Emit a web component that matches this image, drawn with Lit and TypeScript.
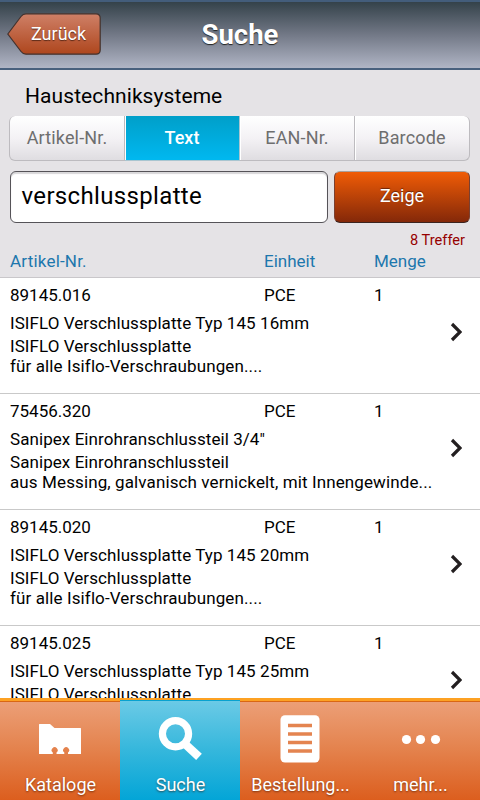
import { LitElement, html, css, svg } from "lit";
import { customElement, state } from "lit/decorators.js";
import { classMap } from "lit/directives/class-map.js";

interface Article {
  nr: string;
  unit: string;
  amount: string;
  title: string;
  line1: string;
  line2: string;
}

const ARTICLES: Article[] = [
  { nr: "89145.016", unit: "PCE", amount: "1", title: "ISIFLO Verschlussplatte Typ 145 16mm", line1: "ISIFLO Verschlussplatte", line2: "für alle Isiflo-Verschraubungen...." },
  { nr: "75456.320", unit: "PCE", amount: "1", title: "Sanipex Einrohranschlussteil 3/4\"", line1: "Sanipex Einrohranschlussteil", line2: "aus Messing, galvanisch vernickelt, mit Innengewinde..." },
  { nr: "89145.020", unit: "PCE", amount: "1", title: "ISIFLO Verschlussplatte Typ 145 20mm", line1: "ISIFLO Verschlussplatte", line2: "für alle Isiflo-Verschraubungen...." },
  { nr: "89145.025", unit: "PCE", amount: "1", title: "ISIFLO Verschlussplatte Typ 145 25mm", line1: "ISIFLO Verschlussplatte", line2: "für alle Isiflo-Verschraubungen...." },
];

const ICONS = {
  folder: svg`<path fill="#fff" d="M39 24.5 Q39 24 39.5 24 H50 L54.5 28 H80.500 Q81 28 81 28.500 V53.500 Q81 54 80.500 54 H68 V52.600 A3 3 0 1 0 64.300 52.600 V54 H56.500 V52.600 A3 3 0 1 0 52.800 52.600 V54 H39.500 Q39 54 39 53.500 Z"/>`,
  search: svg`<circle cx="55.500" cy="33.700" r="13.100" fill="none" stroke="#fff" stroke-width="7.200"/><path d="M64.500 43.500 L79 56.800" stroke="#fff" stroke-width="8.400"/>`,
  order: svg`<rect x="40.500" y="15.300" width="39" height="47.200" rx="4.500" fill="#fff"/><path d="M48 25.500H72M48 34H72M48 42.500H72M48 51H72" stroke="#e48450" stroke-width="3.600"/>`,
  more: svg`<circle cx="46.500" cy="39.500" r="4.600" fill="#fff"/><circle cx="60.500" cy="39.500" r="4.600" fill="#fff"/><circle cx="75.500" cy="39.500" r="4.600" fill="#fff"/>`,
};

@customElement("article-row")
class ArticleRow extends LitElement {
  static properties = { article: { attribute: false } };
  declare article: Article;

  static styles = css`
    :host { display: block; height: 116px; box-sizing: border-box; border-bottom: 1px solid #c9c9c9; padding: 7px 10px 0; background: #fff; color: #000; }
    .layout { display: flex; }
    .info { flex: 1; min-width: 0; font-size: 17px; line-height: 20px; white-space: nowrap; }
    .cells { display: grid; grid-template-columns: 254px 110px 1fr; }
    .title { margin-top: 8px; letter-spacing: .07px; }
    .first { margin-top: 3px; letter-spacing: .07px; }
    .second { letter-spacing: .11px; }
    .arrow { width: 12px; height: 20px; margin: 37px 8px 0 0; flex: none; }
  `;

  render() {
    const a = this.article;
    return html`<div class="layout">
      <div class="info">
        <div class="cells"><span>${a.nr}</span><span>${a.unit}</span><span>${a.amount}</span></div>
        <div class="title">${a.title}</div>
        <div class="first">${a.line1}</div>
        <div class="second">${a.line2}</div>
      </div>
      <svg class="arrow" viewBox="0 0 12 20"><path d="M2 2 L10 10 L2 18" fill="none" stroke="#231f20" stroke-width="3.200"/></svg>
    </div>`;
  }
}

@customElement("app-root")
class AppRoot extends LitElement {
  @state() mode = 1;
  @state() tab = 1;

  static styles = css`
    :host { display: flex; flex-direction: column; width: 480px; height: 800px; overflow: hidden; background: #e5e3e6; font-family: Roboto, "Noto Sans", sans-serif; color: #000; }
    .bar { flex: none; display: grid; grid-template-columns: 102px 1fr 102px; height: 70px; box-sizing: border-box; border-top: 2px solid #435d7b; border-bottom: 2px solid #48607d; background: linear-gradient(#34424a, #737987 50%, #b0b5c5); }
    .back { position: relative; width: 94px; height: 42px; margin: 11px 0 0 7px; }
    .back svg { display: block; }
    .back span { position: absolute; left: 24px; top: 0; line-height: 41px; font-size: 18px; color: #fff; text-shadow: 0 1px 1px #5c2a18; }
    .heading { margin: 0; text-align: center; font-size: 27.5px; font-weight: 700; line-height: 66px; color: #fff; text-shadow: 0 1px 1px #222; }
    .search { flex: none; height: 207px; box-sizing: border-box; padding: 10px 10px 0; }
    .group { padding-left: 15px; font-size: 21px; line-height: 32px; letter-spacing: .08px; }
    .modes { display: flex; height: 45px; margin: 4px 0 0 -1px; }
    .mode { flex: 1; box-sizing: border-box; border: 0 solid #bdbbbf; border-right-width: 1px; border-bottom-width: 1px; background: linear-gradient(#fff, #f4f2f5 50%, #dfdde1); text-align: center; font-size: 18px; line-height: 44px; letter-spacing: .15px; color: #6e6e6e; }
    .mode:first-child { border-radius: 6px 0 0 6px; border-left-width: 1px; }
    .mode:last-child { border-radius: 0 6px 6px 0; }
    .mode.on { background: linear-gradient(#009fc9, #00b8f0); color: #fff; font-weight: 500; letter-spacing: 0; border-color: #a9c5d0; }
    .mode + .mode { box-shadow: inset 1px 0 #fff; }
    .query { display: flex; gap: 6px; height: 52px; margin-top: 10px; }
    .field { width: 318px; box-sizing: border-box; border: 1px solid #555358; border-radius: 6px; background: #fff; box-shadow: inset 0 2px 1px #d9d8da; padding-left: 10.5px; font-size: 24px; line-height: 49px; letter-spacing: .34px; }
    .go { flex: 1; box-sizing: border-box; border: 1px solid; border-color: #aaa09c #7a4030 #3c2420; border-radius: 6px; background: linear-gradient(#f05c06, #842809); color: #fff; text-align: center; font-size: 18px; line-height: 48px; text-shadow: 0 -1px 1px #6a2408; }
    .hits { margin: 7px -5px 0 0; padding-right: 10px; text-align: right; font-size: 14.6px; line-height: 20px; color: #960000; }
    .cols { display: grid; grid-template-columns: 254px 110px 1fr; font-size: 17px; line-height: 20px; margin-top: 1px; color: #1d77ad; }
    .cols span:first-child { letter-spacing: .2px; }
    .list { flex: 1; min-height: 0; overflow: hidden; border-top: 1px solid #c9c7ca; }
    .tabs { flex: none; display: flex; height: 102px; box-sizing: border-box; background: linear-gradient(#fda123 0 3px, #d96714 3px 4px, #ec9f77 4px, #e4834e 50px, #dc5e1e); }
    .tab { width: 120px; display: flex; flex-direction: column; color: #fff; text-align: center; }
    .tab.on { margin-top: 2px; background: linear-gradient(#08a2d0 0 1px, #6bcae6 1px, #35b7dc 50px, #03a5d7); }
    .icon { display: block; width: 120px; height: 74px; }
    .on .icon { height: 72px; }
    .label { padding-left: 1px; font-size: 18px; line-height: 26px; white-space: nowrap; text-shadow: 0 1px 2px rgba(60, 20, 0, .6); }
  `;

  render() {
    const modes = ["Artikel-Nr.", "Text", "EAN-Nr.", "Barcode"];
    const tabs = [
      { label: "Kataloge", icon: ICONS.folder },
      { label: "Suche", icon: ICONS.search },
      { label: "Bestellung...", icon: ICONS.order },
      { label: "mehr...", icon: ICONS.more },
    ];
    return html`
      <header class="bar">
        <div class="back">
          <svg width="94" height="42" viewBox="0 0 94 42">
            <defs><linearGradient id="copper" x2="0" y2="1"><stop stop-color="#cf8067"/><stop offset="1" stop-color="#ae461d"/></linearGradient></defs>
            <path d="M.8 21 L14 3.500 Q16 .8 19 .8 H89 Q93.200 .8 93.200 5 V37 Q93.200 41.200 89 41.200 H19 Q16 41.200 14 38.500 Z" fill="url(#copper)" stroke="#42322e" stroke-width="1.200"/>
          </svg>
          <span>Zurück</span>
        </div>
        <h1 class="heading">Suche</h1>
      </header>
      <section class="search">
        <div class="group">Haustechniksysteme</div>
        <div class="modes">${modes.map((m, i) => html`<div class=${classMap({ mode: true, on: i === this.mode })} @click=${() => (this.mode = i)}>${m}</div>`)}</div>
        <div class="query"><div class="field">verschlussplatte</div><div class="go">Zeige</div></div>
        <div class="hits">8 Treffer</div>
        <div class="cols"><span>Artikel-Nr.</span><span>Einheit</span><span>Menge</span></div>
      </section>
      <main class="list">${ARTICLES.map((a) => html`<article-row .article=${a}></article-row>`)}</main>
      <nav class="tabs">${tabs.map((t, i) => html`<div class=${classMap({ tab: true, on: i === this.tab })} @click=${() => (this.tab = i)}>
        <svg class="icon" viewBox=${i === this.tab ? "0 0 120 72" : "0 -2 120 74"}>${t.icon}</svg>
        <span class="label">${t.label}</span>
      </div>`)}</nav>`;
  }
}
